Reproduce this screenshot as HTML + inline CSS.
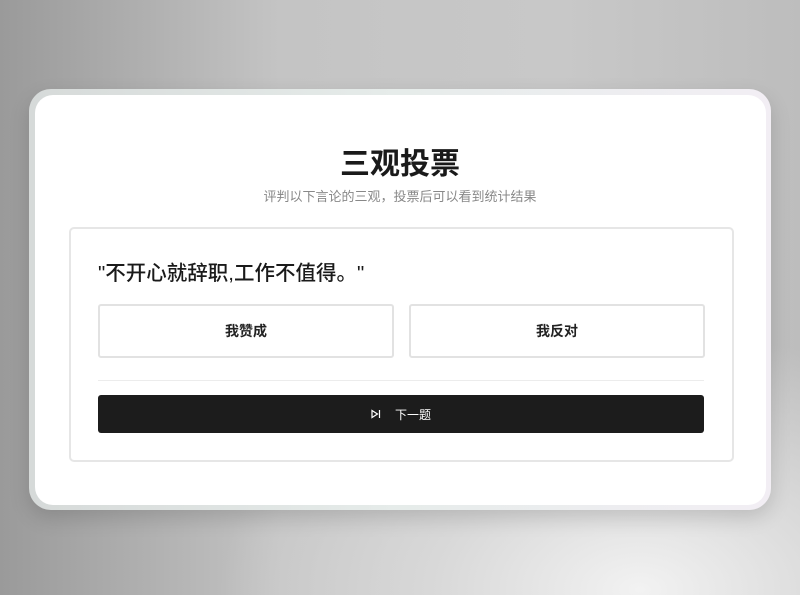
<!DOCTYPE html>
<html><head><meta charset="utf-8"><style>
*{margin:0;padding:0;box-sizing:border-box}
body{width:800px;height:595px;overflow:hidden;position:relative;font-family:"Liberation Sans","Noto Sans CJK SC",sans-serif;
background:radial-gradient(ellipse 420px 260px at 640px 590px,#f2f2f2 0%,#d8d8d8 50%,rgba(200,200,200,0) 100%),linear-gradient(90deg,#9a9a9a 0%,#c4c4c4 35%,#c8c8c8 70%,#bdbdbd 100%);}
.outer{position:absolute;left:29px;top:89px;width:742px;height:421px;border-radius:22px;background:linear-gradient(90deg,#d6dad9,#e6ecea 50%,#f2eef4);box-shadow:0 8px 20px rgba(0,0,0,.15)}
.card{position:absolute;left:35px;top:95px;width:731px;height:410px;border-radius:18px;background:#fff}
h1{position:absolute;left:0;width:800px;top:139px;text-align:center;font-size:30px;font-weight:700;color:#1a1a1a}
.sub{position:absolute;left:0;width:800px;top:186px;text-align:center;font-size:13px;color:#888}
.box{position:absolute;left:69px;top:227px;width:665px;height:235px;border:2px solid #e6e6e6;border-radius:5px}
.q{position:absolute;left:98px;top:256px;font-size:20.5px;font-weight:500;color:#1a1a1a}
.btn{position:absolute;top:304px;height:54px;width:296px;border:2px solid #e2e2e2;border-radius:3px;display:flex;align-items:center;justify-content:center;font-size:14px;font-weight:700;color:#222}
.hr{position:absolute;left:98px;top:380px;width:606px;height:1px;background:#ececec}
.next{position:absolute;left:98px;top:395px;width:606px;height:38px;background:#1c1c1c;border-radius:3px;display:flex;align-items:center;justify-content:center;color:#fff;font-size:12px;gap:14px}
</style></head><body>
<div class="outer"></div><div class="card"></div>
<h1>三观投票</h1>
<div class="sub">评判以下言论的三观，投票后可以看到统计结果</div>
<div class="box"></div>
<div class="q">"不开心就辞职,工作不值得。"</div>
<div class="btn" style="left:98px">我赞成</div>
<div class="btn" style="left:409px">我反对</div>
<div class="hr"></div>
<div class="next"><svg width="10" height="10" viewBox="0 0 10 10"><path d="M1 1.5L6.5 5L1 8.5Z" fill="none" stroke="#fff" stroke-width="1.2"/><path d="M8.5 1v8" stroke="#fff" stroke-width="1.2"/></svg><span>下一题</span></div>
</body></html>
